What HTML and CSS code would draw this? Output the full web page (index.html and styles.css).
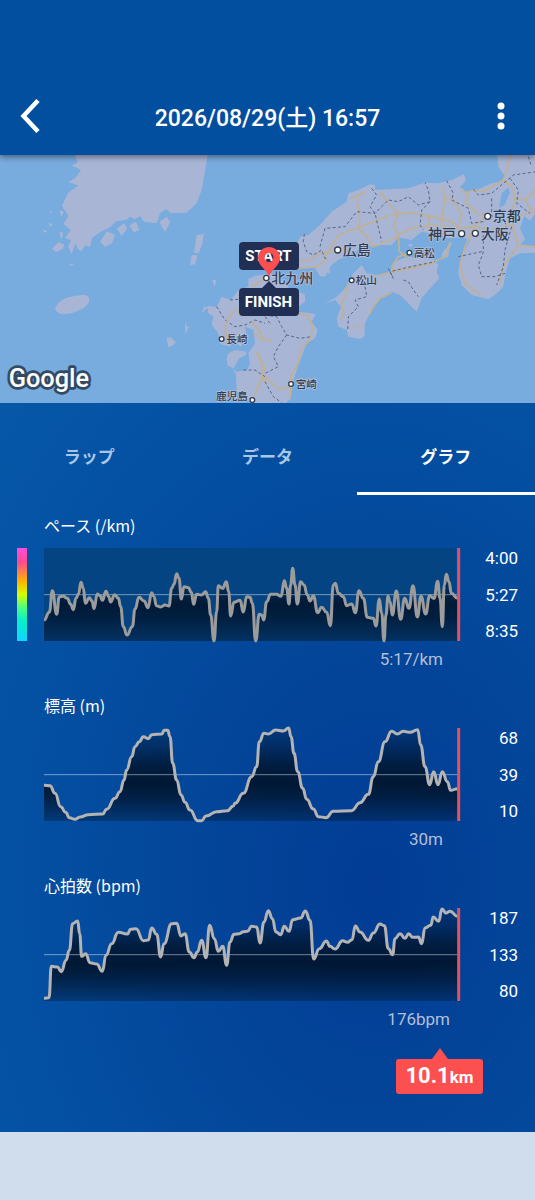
FILE: index.html
```html
<!DOCTYPE html>
<html lang="ja">
<head>
    <meta charset="UTF-8">
    <meta name="viewport" content="width=device-width, initial-scale=1.0">
    <title>2026/08/29(土) 16:57</title>
    <link rel="stylesheet" href="styles.css">
</head>
<body>
    <header class="app-header">
        <button class="icon-button" type="button" aria-label="戻る">
            <svg width="20" height="34" viewBox="0 0 20 34"><path d="M18 1.500 3.500 17 18 32.500" fill="none" stroke="#fff" stroke-width="4.500"/></svg>
        </button>
        <h1 class="app-title">2026/08/29(土) 16:57</h1>
        <button class="icon-button" type="button" aria-label="メニュー">
            <svg width="8" height="28" viewBox="0 0 8 28"><g fill="#fff"><circle cx="4" cy="4" r="3.500"/><circle cx="4" cy="14" r="3.500"/><circle cx="4" cy="24" r="3.500"/></g></svg>
        </button>
    </header>

    <div class="map">
        <svg class="map-canvas" viewBox="0 15 1605 744" preserveAspectRatio="xMidYMid slice">
            <!-- Korea, Jeju and Tsushima -->
            <g class="land">
                <path d="M225 15 232 38 215 46 243 60 228 82 205 97 235 106 203 130 186 168 205 198 190 222 212 240 195 264 213 270 205 290 215 313 226 280 236 300 245 304 255 286 270 291 276 264 300 247 330 232 348 214 378 210 390 200 404 208 420 199 432 215 470 220 480 190 498 177 512 190 560 188 590 160 605 120 614 70 623 15Z"/>
                <path d="M300 276 320 244 345 254 336 280 315 290ZM350 236 372 220 382 235 365 258ZM388 226 408 215 418 240 402 248ZM478 217 500 200 511 216 495 246ZM156 296 176 276 193 284 188 297 168 307ZM178 243 190 250 184 270ZM178 180 192 185 184 200ZM145 216 158 224 150 230ZM126 238 142 243 134 249ZM206 341 222 342 214 347ZM150 182 156 186 152 191Z"/>
                <path d="M165 478C168 468 172 462 178 457 192 443 212 439 230 437 244 434 258 434 264 439 268 444 269 450 266 458 260 468 252 475 240 480 222 488 205 493 188 493 178 491 172 489 165 478Z"/>
                <path d="M590 255 612 252 606 285 596 310 582 308ZM575 315 592 316 586 343 570 346ZM637 388 650 392 643 410ZM500 563 512 562 528 576 520 586 504 592ZM555 515 560 528 567 531 556 552ZM605 490 612 470 626 470Z"/>
            </g>
            <!-- Kyushu -->
            <g class="land">
                <path d="M745 386 765 378 795 372 830 375 850 390 870 420 890 420 915 435 915 455 895 470 890 485 920 488 948 492 935 515 953 540 945 565 920 580 905 620 890 660 878 700 873 745 855 762 765 762 725 745 710 720 708 672 696 655 710 665 742 660 750 640 745 610 765 580 760 540 735 530 740 560 722 590 700 572 690 590 660 582 655 550 635 525 640 500 625 490 622 468 650 470 665 440 692 450 715 420 745 410Z"/>
                <path d="M685 610 705 600 740 605 738 615 718 625 700 655 682 646 680 625Z"/>
            </g>
            <g transform="translate(795 0)">
                <!-- Honshu -->
                <path class="land" d="M60 300 95 282 108 258 130 255 165 225 200 185 245 155 250 130 280 120 315 103 330 106 330 120 370 118 430 115 480 98 520 100 560 90 597 72 603 92 585 110 600 125 640 118 680 100 715 93 718 75 700 50 697 15 815 15 815 185 795 212 778 198 765 235 780 268 765 285 815 290 815 308 765 310 735 325 722 370 715 410 690 435 670 448 620 435 590 405 580 370 585 330 600 300 615 270 590 262 550 265 520 255 470 245 440 270 400 262 380 285 340 285 300 290 270 305 240 320 220 330 200 345 180 380 165 378 150 355 90 350 60 360Z"/>
                <!-- Shikoku and Awaji -->
                <path class="land" d="M290 345 305 370 340 375 375 365 385 335 430 320 470 325 510 330 520 345 515 365 523 385 500 410 470 445 455 485 430 460 405 435 380 425 345 445 320 480 300 520 298 560 285 567 250 560 245 540 220 530 215 505 228 470 210 450 178 462 215 440 240 415 265 370Z"/>
                <path class="land" d="M562 276 552 300 550 320 528 328 533 305ZM425 285 442 280 440 292ZM185 365 195 358 196 372Z"/>
                <path class="sea" d="M703 173 710 130 730 113 735 128 718 165Z"/>
                <path class="road" d="M98 333 135 330 165 310 200 305 230 300M98 355 155 350 175 335 190 305 220 255 275 235 325 215 375 195 440 188 500 200 560 215 590 235 625 230 660 200M255 147 275 138 285 210 280 235 310 265 320 290M275 138 300 125M345 125 370 160 400 190 385 225 400 255 440 235 500 225 590 235M400 255 403 305 430 325M320 292 355 280 400 258M495 225 490 200M532 112 540 150 535 175 530 220M540 150 560 145 590 190 585 215M590 115 610 140 600 155 635 190 665 200M600 130 625 120 655 125 715 90 738 15M715 90 740 110 750 145 780 150 815 118M750 145 735 200 775 195 815 180M780 148 800 185M625 235 600 290 585 345 600 400 650 440M625 230 680 240 740 225 760 285 715 350 705 400M760 285 810 290"/>
                <path class="road" d="M555 275 540 320 500 340 460 350 385 365 335 378M385 365 380 350 400 320 430 310M250 400 240 440 228 460 238 490 228 510M380 428 345 445 325 470 312 495M265 532 285 528"/>
                <path class="road" d="M98 490 125 495 145 530 135 570 110 595 95 650 78 680 75 745M75 712 40 718 0 680M0 568 20 572M-35 550 0 568M-25 605 0 655-10 680 0 700"/>
                <path class="border" d="M118 252 115 275 125 305 145 315 170 300 180 325 190 325M165 290 180 235 240 230 275 185 330 190 370 150 400 155 430 140 460 165 495 155 490 120 480 98M320 115 335 135 315 170 330 190 350 275M495 155 470 180 465 225 475 240M545 92 565 130 560 150 610 175 620 220 655 215M625 118 640 135 680 130 715 100 745 75 815 65M680 145 680 190M735 85 760 120 755 160 795 190M740 230 720 300 715 350 695 405M655 240 655 290 655 305 650 320 640 345 650 380 690 380 720 370M650 305 580 320M790 20 800 50M675 195 720 215 732 265"/>
                <path class="border" d="M300 410 305 440 270 450 280 470 250 500 248 540M370 355 385 385 375 365 415 355 510 335M415 390 430 395 445 420 460 440"/>
                <path class="border" d="M0 495 35 500 50 530 65 555 105 565 140 560M0 500 15 520M65 555 40 590 25 620 40 650 0 670M0 695 25 740 50 758M-145 470-120 510-90 530-60 525-30 510 0 520M-65 660-30 660 0 680M-105 450-80 448"/>
            </g>
            <path class="road" d="M755 410 795 385M675 530 690 495 715 475M680 565 675 530M755 515 785 550 785 575M770 605 785 640 785 680 765 735M785 680 805 690"/>
            <g class="city-dot">
                <circle cx="665" cy="567" r="7"/><circle cx="757" cy="750" r="7"/><circle cx="799" cy="384" r="8"/><circle cx="873" cy="702" r="7"/>
                <circle cx="1013" cy="300" r="9"/><circle cx="1055" cy="391" r="7"/><circle cx="1228" cy="308" r="7"/>
                <circle cx="1385" cy="251" r="9"/><circle cx="1426" cy="250" r="9"/><circle cx="1463" cy="199" r="9"/>
            </g>
            <g class="city">
                <text x="1478" y="214">京都</text>
                <text x="1284" y="267">神戸</text>
                <text x="1442" y="267">大阪</text>
                <text x="1028" y="316">広島</text>
                <text x="814" y="400">北九州</text>
            </g>
            <g class="city city-small">
                <text x="1241" y="320">高松</text>
                <text x="1067" y="403">松山</text>
                <text x="679" y="578">長崎</text>
                <text x="887" y="714">宮崎</text>
                <text x="648" y="750">鹿児島</text>
            </g>
            <text class="map-brand" x="26" y="712">Google</text>
        </svg>
        <span class="flag flag-start">START</span>
        <svg class="pin" width="24" height="34" viewBox="0 0 24 34"><path d="M12 1C5.900 1 1 5.700 1 12c0 7 7 10 11 18 4-8 11-11 11-18C23 5.700 18.100 1 12 1Zm0 6a4.500 4.500 0 1 1 0 9 4.500 4.500 0 0 1 0-9Z" fill="#fb4f50" fill-rule="evenodd"/></svg>
        <span class="flag flag-finish">FINISH</span>
    </div>

    <main class="panel">
        <nav class="tabs">
            <button class="tab" type="button">ラップ</button>
            <button class="tab" type="button">データ</button>
            <button class="tab active" type="button">グラフ</button>
        </nav>

        <div class="metrics">
            <section class="metric metric-pace">
                <h2 class="metric-title">ペース (/km)</h2>
                <div class="color-scale"></div>
                <svg class="plot" data-series="pace" viewBox="0 0 1248 279" preserveAspectRatio="none"></svg>
                <div class="axis"><span>4:00</span><span>5:27</span><span>8:35</span></div>
                <div class="metric-value">5:17/km</div>
            </section>
            <section class="metric">
                <h2 class="metric-title">標高 (m)</h2>
                <svg class="plot" data-series="elevation" viewBox="0 0 1248 279" preserveAspectRatio="none"></svg>
                <div class="axis"><span>68</span><span>39</span><span>10</span></div>
                <div class="metric-value">30m</div>
            </section>
            <section class="metric metric-heart">
                <h2 class="metric-title">心拍数 (bpm)</h2>
                <svg class="plot" data-series="heart" viewBox="0 0 1248 279" preserveAspectRatio="none"></svg>
                <div class="axis"><span>187</span><span>133</span><span>80</span></div>
                <div class="metric-value">176bpm</div>
            </section>
        </div>

        <div class="distance">10.1<span class="distance-unit">km</span></div>
    </main>

    <script src="charts.js"></script>
</body>
</html>
```

FILE: styles.css
```css
body {
    margin: 0;
    min-height: 100vh;
    background-color: #cfddec;
    font-family: Roboto, 'Noto Sans CJK JP', sans-serif;
    color: #ffffff;
}
button {
    border: 0;
    padding: 0;
    background: none;
    color: inherit;
    font-family: inherit;
    cursor: pointer;
}
.app-header {
    position: relative;
    z-index: 2;
    display: flex;
    justify-content: space-between;
    align-items: center;
    padding: 80px 20px 4px;
    background-color: #034f9f;
    box-shadow: 0 2px 6px rgba(0, 0, 0, 0.45);
}
.icon-button {
    display: flex;
    justify-content: flex-start;
    align-items: center;
    width: 44px;
    height: 71px;
}
.icon-button:last-child {
    justify-content: flex-end;
    padding-right: 10px;
}
.app-title {
    margin: 0;
    padding-top: 6px;
    font-size: 23px;
    line-height: 28px;
    font-weight: 500;
}

/* Map */
.map {
    position: relative;
    height: 248px;
    overflow: hidden;
    background-color: #78abde;
}
.map-canvas {
    display: block;
    width: 100%;
    height: 100%;
}
.land {
    fill: #a8b5d4;
}
.sea {
    fill: #78abde;
}
.road {
    fill: none;
    stroke: #c0b094;
    stroke-width: 5;
    stroke-linejoin: round;
}
.border {
    fill: none;
    stroke: #56658a;
    stroke-width: 3;
    stroke-dasharray: 9 7;
}
.city-dot {
    fill: #ffffff;
    stroke: #303c4c;
    stroke-width: 4;
}
.city {
    font-family: 'Noto Sans CJK JP', sans-serif;
    font-size: 42px;
    font-weight: 500;
    fill: #2f3c50;
    stroke: #b6c3de;
    stroke-width: 4;
    paint-order: stroke;
}
.city-small {
    font-size: 32px;
}
.map-brand {
    font-family: Roboto, sans-serif;
    font-size: 76px;
    font-weight: 500;
    fill: #ffffff;
    stroke: #334a63;
    stroke-width: 16;
    stroke-linejoin: round;
    paint-order: stroke;
}
.flag {
    position: absolute;
    left: 50%;
    width: 60px;
    margin-left: -29px;
    border-radius: 4px;
    background-color: #222f55;
    font-size: 15px;
    line-height: 28px;
    font-weight: 700;
    text-align: center;
}
.flag-start {
    top: 87px;
}
.flag-finish {
    top: 133px;
}
.flag-finish::before {
    content: '';
    position: absolute;
    top: -7px;
    left: 22px;
    border: 8px solid transparent;
    border-top: 0;
    border-bottom-color: #222f55;
}
.pin {
    position: absolute;
    top: 91px;
    left: 50%;
    margin-left: -11px;
}

/* Tabs */
.panel {
    padding-bottom: 38px;
    background: radial-gradient(ellipse 480px 660px at 70% 66%, #023c94 0%, #03469a 40%, #0450a2 75%, #085cab 125%);
}
.tabs {
    display: flex;
}
.tab {
    flex: 1;
    height: 92px;
    padding-top: 15px;
    border-bottom: 3px solid transparent;
    font-size: 17px;
    font-weight: 700;
    color: #a8c6e8;
}
.tab.active {
    border-bottom-color: #ffffff;
    color: #ffffff;
}

/* Charts */
.metrics {
    display: flex;
    flex-direction: column;
    gap: 22px;
    padding: 18px 17px 0;
}
.metric {
    display: grid;
    grid-template-columns: 10px 1fr 41px;
    column-gap: 17px;
}
.metric-title {
    grid-column: 2 / 4;
    margin: 0 0 11px;
    font-family: 'Noto Sans CJK JP', sans-serif;
    font-size: 16px;
    line-height: 24px;
    font-weight: 400;
}
.color-scale {
    grid-column: 1;
    background: linear-gradient(#ff4ddd, #ff4a90 15%, #ffb300 36%, #d4ff00 50%, #4cff80 64%, #08f0c8 78%, #12d4ff);
}
.plot {
    grid-column: 2;
    width: 100%;
    height: 93px;
    overflow: visible;
}
.metric-pace .plot {
    background: linear-gradient(90deg, #054483 99%, transparent 99%);
}
.plot-line {
    fill: none;
    stroke: #b4b4b4;
    stroke-width: 3;
    stroke-linejoin: round;
    vector-effect: non-scaling-stroke;
}
.metric-pace .plot-line {
    stroke: #9c9c9c;
}
.plot-average {
    stroke: rgba(255, 255, 255, 0.45);
    stroke-width: 1;
    vector-effect: non-scaling-stroke;
}
.plot-cursor {
    stroke: #e8505a;
    stroke-width: 3;
    vector-effect: non-scaling-stroke;
}
.axis {
    grid-column: 3;
    display: flex;
    flex-direction: column;
    justify-content: space-between;
    font-size: 17px;
    line-height: 20px;
    text-align: right;
}
.metric-value {
    grid-column: 2;
    margin-top: 6px;
    padding-right: 17px;
    font-size: 17px;
    line-height: 24px;
    text-align: right;
    color: #b3bfd8;
}
.metric-heart .metric-value {
    padding-right: 10px;
}
.distance {
    position: relative;
    width: 87px;
    margin: 28px 52px 0 auto;
    border-radius: 3px;
    background-color: #fb4f50;
    font-size: 22px;
    line-height: 34px;
    font-weight: 700;
    text-align: center;
}
.distance::before {
    content: '';
    position: absolute;
    top: -11px;
    left: 36px;
    border: 8px solid transparent;
    border-top: 0;
    border-bottom: 11px solid #fb4f50;
}
.distance-unit {
    font-size: 17px;
}
```

FILE: charts.js
```js
// x, y pairs in plot units (1248 x 279, origin at the top left)
const series = {
    pace: '0,216 16,193 25,128 38,199 46,146 58,145 70,151 80,169 88,185 96,151 103,139 111,103 118,121 124,166 136,149 144,159 150,182 160,138 168,143 175,157 186,130 194,146 200,162 212,140 223,151 230,176 238,236 249,261 265,236 273,183 285,148 300,159 312,179 323,134 330,146 337,173 350,177 363,171 375,174 383,121 390,109 398,77 405,91 412,153 420,116 433,119 442,133 449,169 458,139 473,141 485,131 493,151 500,201 510,279 518,191 523,113 536,121 547,101 554,131 560,204 570,163 588,157 598,192 608,146 618,148 625,166 635,279 646,199 653,201 659,216 668,161 680,139 698,139 711,145 721,98 728,121 735,168 740,111 746,61 753,111 760,168 770,101 780,111 790,141 798,159 808,143 821,194 833,178 848,193 859,233 868,111 874,106 883,136 898,146 908,173 923,168 934,194 945,128 958,151 970,208 988,211 996,234 1006,153 1013,196 1020,279 1026,201 1032,145 1038,161 1045,201 1057,129 1070,214 1082,151 1095,181 1107,113 1120,207 1131,145 1145,198 1157,143 1170,151 1181,100 1188,151 1195,236 1201,111 1207,79 1215,101 1222,136 1241,151',
    elevation: '0,172 18,173 33,196 50,236 65,253 76,269 93,274 108,267 133,260 176,258 188,244 213,211 228,191 240,156 248,126 263,86 273,56 286,41 298,26 313,32 323,20 353,18 361,7 371,7 378,26 386,106 398,156 411,201 423,223 438,246 461,278 473,278 486,264 518,251 550,248 568,234 573,226 598,196 623,146 638,116 646,41 660,16 673,18 695,6 718,9 734,0 741,26 750,76 761,131 776,181 788,214 808,243 823,266 846,269 868,250 923,248 948,224 973,199 988,146 1003,101 1023,41 1043,10 1060,18 1078,10 1098,13 1121,5 1130,51 1143,116 1157,170 1169,131 1182,170 1195,131 1210,161 1220,187 1241,182',
    heart: '0,271 15,269 22,175 40,177 52,191 66,157 76,127 86,47 101,39 107,77 113,145 125,137 138,164 158,168 175,190 186,142 203,107 223,73 250,78 260,64 276,62 298,98 313,96 323,60 338,79 350,147 360,107 383,47 398,46 411,84 423,77 436,132 450,149 460,132 473,97 486,149 497,52 511,92 523,130 536,115 548,172 558,102 570,79 586,77 598,71 610,70 623,55 638,57 648,105 660,42 673,8 685,32 696,72 710,80 721,55 735,70 746,35 770,30 784,9 798,37 809,153 826,122 847,99 858,115 873,123 896,98 910,103 924,95 934,54 948,72 973,97 988,75 1008,48 1021,53 1033,122 1046,140 1053,92 1068,77 1083,91 1094,77 1106,88 1123,87 1133,107 1143,60 1160,52 1168,27 1184,40 1194,3 1206,15 1218,10 1241,25'
};

// pace only shades the part below the average line
const shades = {
    pace: [[0, 0], [0.3, 0], [0.4, 0.5], [0.6, 0.92], [0.75, 0.8], [1, 0.4]],
    elevation: [[0, 0.25], [0.2, 0.5], [0.4, 0.85], [0.6, 0.96], [0.75, 0.8], [1, 0.35]],
    heart: [[0, 0.25], [0.2, 0.5], [0.4, 0.85], [0.6, 0.96], [0.75, 0.8], [1, 0.35]]
};

function smoothPath(points) {
    let d = 'M' + points[0].join(' ');
    for (let i = 1; i < points.length; i++) {
        const [x0, y0] = points[i - 1];
        const [x1, y1] = points[i];
        const mid = (x0 + x1) / 2;
        d += `C${mid} ${y0} ${mid} ${y1} ${x1} ${y1}`;
    }
    return d;
}

document.querySelectorAll('.plot').forEach(function (plot) {
    const name = plot.dataset.series;
    const points = series[name].split(' ').map(pair => pair.split(',').map(Number));
    const line = smoothPath(points);
    const stops = shades[name].map(([offset, opacity]) =>
        `<stop offset="${offset}" stop-color="#001630" stop-opacity="${opacity}"/>`).join('');

    plot.innerHTML = `
        <linearGradient id="shade-${name}" gradientUnits="userSpaceOnUse" x1="0" y1="0" x2="0" y2="279">${stops}</linearGradient>
        <path d="${line}V279H0Z" fill="url(#shade-${name})"/>
        <line class="plot-average" x1="0" y1="140" x2="1241" y2="140"/>
        <path class="plot-line" d="${line}"/>
        <line class="plot-cursor" x1="1244" y1="0" x2="1244" y2="279"/>`;
});
```
